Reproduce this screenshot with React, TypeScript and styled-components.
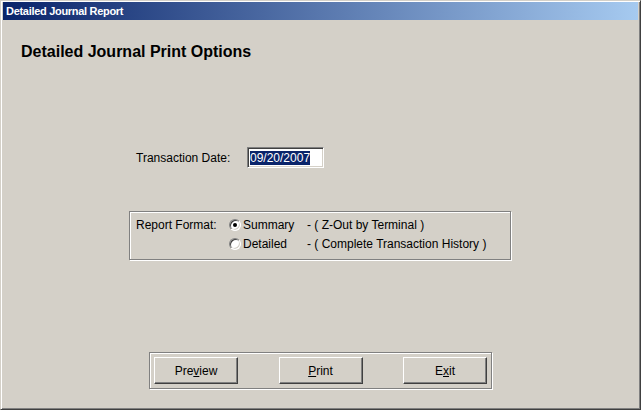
import styled, { createGlobalStyle } from "styled-components";

const GlobalStyle = createGlobalStyle`
  html, body {
    margin: 0;
    padding: 0;
    background: #d4d0c8;
  }
  body {
    font-family: "Liberation Sans", Arial, sans-serif;
    font-size: 12px;
    color: #000;
  }
`;

const Window = styled.div`
  box-sizing: border-box;
  width: 641px;
  height: 410px;
  display: flex;
  flex-direction: column;
  background: #d4d0c8;
  border-top: 1px solid #d4d0c8;
  border-left: 1px solid #d4d0c8;
  border-right: 1px solid #404040;
  border-bottom: 1px solid #404040;
  box-shadow: inset 1px 1px 0 #ffffff, inset -1px -1px 0 #808080;
  padding: 1px 2px 2px 2px;
`;

const TitleBar = styled.div`
  height: 18px;
  display: flex;
  align-items: center;
  padding-left: 3px;
  background: linear-gradient(to right, #0a246a 0%, #a6caf0 100%);
  color: #ffffff;
  font-weight: bold;
  font-size: 11px;
  letter-spacing: -0.3px;
`;

const Body = styled.div`
  flex: 1;
  display: flex;
  flex-direction: column;
  padding: 0 0 18px 0;
`;

const Heading = styled.h1`
  margin: 23px 0 0 18px;
  font-size: 16px;
  line-height: 18px;
  font-weight: bold;
`;

const DateRow = styled.div`
  display: flex;
  align-items: center;
  margin: 86px 0 0 133px;
  height: 21px;
`;

const Label = styled.span<{ $width: number }>`
  width: ${(p) => p.$width}px;
  white-space: nowrap;
`;

const DateInput = styled.div`
  box-sizing: border-box;
  width: 77px;
  height: 21px;
  background: #ffffff;
  border-top: 1px solid #808080;
  border-left: 1px solid #808080;
  border-right: 1px solid #ffffff;
  border-bottom: 1px solid #ffffff;
  box-shadow: inset 1px 1px 0 #404040, inset -1px -1px 0 #d4d0c8;
  padding: 3px 0 0 2px;
`;

const Selected = styled.span`
  background: #0a246a;
  color: #ffffff;
  line-height: 14px;
  display: inline-block;
`;

const GroupBox = styled.div`
  box-sizing: border-box;
  width: 382px;
  height: 49px;
  margin: 43px 0 0 126px;
  border: 1px solid #808080;
  box-shadow: inset 1px 1px 0 #ffffff, 1px 1px 0 #ffffff;
  padding: 3px 0 0 6px;
  display: grid;
  grid-template-columns: 93px 14px 64px auto;
  grid-auto-rows: 19px;
  align-items: center;
`;

const Radio = styled.span<{ $checked?: boolean }>`
  box-sizing: border-box;
  width: 12px;
  height: 12px;
  border-radius: 50%;
  background: #ffffff;
  border: 1px solid;
  border-color: #808080 #ffffff #ffffff #808080;
  box-shadow: inset 1px 1px 0 #404040, inset -1px -1px 0 #d4d0c8;
  display: flex;
  align-items: center;
  justify-content: center;
  &::after {
    content: "";
    width: 4px;
    height: 4px;
    border-radius: 50%;
    background: ${(p) => (p.$checked ? "#000000" : "transparent")};
  }
`;

const ButtonFrame = styled.div`
  box-sizing: border-box;
  width: 343px;
  height: 37px;
  margin: auto 0 0 146px;
  border: 1px solid #808080;
  box-shadow: inset 1px 1px 0 #ffffff, 1px 1px 0 #ffffff;
  padding: 4px 4px 0 4px;
  display: flex;
  justify-content: space-between;
  align-items: flex-start;
`;

const Button = styled.button`
  box-sizing: border-box;
  width: 84px;
  height: 27px;
  background: #d4d0c8;
  font-family: "Liberation Sans", Arial, sans-serif;
  font-size: 12px;
  color: #000;
  border-top: 1px solid #ffffff;
  border-left: 1px solid #ffffff;
  border-right: 1px solid #404040;
  border-bottom: 1px solid #404040;
  box-shadow: inset -1px -1px 0 #808080, inset 1px 1px 0 #d4d0c8;
  padding: 0;
  & u {
    text-decoration: underline;
  }
`;

export default function App() {
  return (
    <>
      <GlobalStyle />
      <Window>
        <TitleBar>Detailed Journal Report</TitleBar>
        <Body>
          <Heading>Detailed Journal Print Options</Heading>
          <DateRow>
            <Label $width={111}>Transaction Date:</Label>
            <DateInput>
              <Selected>09/20/2007</Selected>
            </DateInput>
          </DateRow>
          <GroupBox>
            <Label $width={93}>Report Format:</Label>
            <Radio $checked />
            <span>Summary</span>
            <span>- ( Z-Out by Terminal )</span>
            <span />
            <Radio />
            <span>Detailed</span>
            <span>- ( Complete Transaction History )</span>
          </GroupBox>
          <ButtonFrame>
            <Button>
              Pre<u>v</u>iew
            </Button>
            <Button>
              <u>P</u>rint
            </Button>
            <Button>
              E<u>x</u>it
            </Button>
          </ButtonFrame>
        </Body>
      </Window>
    </>
  );
}
